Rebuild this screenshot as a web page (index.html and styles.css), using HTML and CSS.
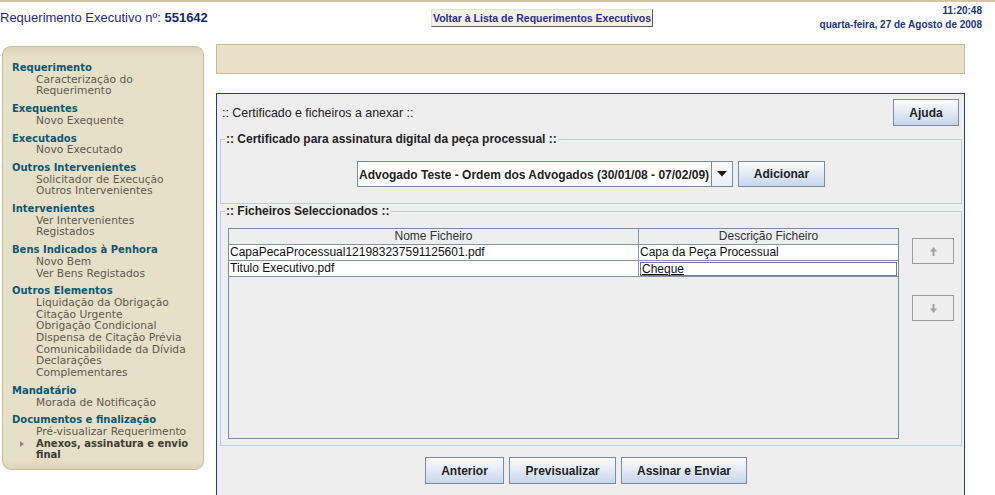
FILE: index.html
```html
<!DOCTYPE html>
<html lang="pt">
<head>
<meta charset="utf-8">
<title>Requerimento Executivo</title>
<link rel="stylesheet" href="styles.css">
</head>
<body>
<div class="topline"></div>
<header class="header">
  <div class="req-title">Requerimento Executivo nº: <b>551642</b></div>
  <div class="back-wrap"><button class="back-btn">Voltar à Lista de Requerimentos Executivos</button></div>
  <div class="datetime">
    <div>11:20:48</div>
    <div>quarta-feira, 27 de Agosto de 2008</div>
  </div>
</header>
<div class="layout">
  <nav class="sidebar">
    <div class="group">
      <div class="group-title">Requerimento</div>
      <a class="item">Caracterização do<br>Requerimento</a>
    </div>
    <div class="group">
      <div class="group-title">Exequentes</div>
      <a class="item">Novo Exequente</a>
    </div>
    <div class="group">
      <div class="group-title">Executados</div>
      <a class="item">Novo Executado</a>
    </div>
    <div class="group">
      <div class="group-title">Outros Intervenientes</div>
      <a class="item">Solicitador de Execução</a>
      <a class="item">Outros Intervenientes</a>
    </div>
    <div class="group">
      <div class="group-title">Intervenientes</div>
      <a class="item">Ver Intervenientes<br>Registados</a>
    </div>
    <div class="group">
      <div class="group-title">Bens Indicados à Penhora</div>
      <a class="item">Novo Bem</a>
      <a class="item">Ver Bens Registados</a>
    </div>
    <div class="group">
      <div class="group-title">Outros Elementos</div>
      <a class="item">Liquidação da Obrigação</a>
      <a class="item">Citação Urgente</a>
      <a class="item">Obrigação Condicional</a>
      <a class="item">Dispensa de Citação Prévia</a>
      <a class="item">Comunicabilidade da Dívida</a>
      <a class="item">Declarações<br>Complementares</a>
    </div>
    <div class="group">
      <div class="group-title">Mandatário</div>
      <a class="item">Morada de Notificação</a>
    </div>
    <div class="group">
      <div class="group-title">Documentos e finalização</div>
      <a class="item">Pré-visualizar Requerimento</a>
      <a class="item current">Anexos, assinatura e envio<br>final</a>
    </div>
  </nav>
  <main class="main">
    <div class="notice"></div>
    <section class="panel">
      <div class="panel-head">
        <span class="panel-title">:: Certificado e ficheiros a anexar ::</span>
        <button class="jbtn btn-ajuda">Ajuda</button>
      </div>
      <fieldset class="box box-cert">
        <legend>:: Certificado para assinatura digital da peça processual ::</legend>
        <div class="cert-row">
          <div class="combo">
            <span class="combo-text">Advogado Teste - Ordem dos Advogados (30/01/08 - 07/02/09)</span>
            <span class="combo-arrow"><svg width="10" height="6" viewBox="0 0 10 6"><path d="M0 0H10L5 5.5Z" fill="#111"/></svg></span>
          </div>
          <button class="jbtn btn-add">Adicionar</button>
        </div>
      </fieldset>
      <fieldset class="box box-files">
        <legend>:: Ficheiros Seleccionados ::</legend>
        <div class="files-row">
          <div class="table-pane">
            <table class="files">
              <thead>
                <tr><th class="col-name">Nome Ficheiro</th><th class="col-desc">Descrição Ficheiro</th></tr>
              </thead>
              <tbody>
                <tr><td class="col-name">CapaPecaProcessual121983237591125601.pdf</td><td class="col-desc">Capa da Peça Processual</td></tr>
                <tr><td class="col-name">Titulo Executivo.pdf</td><td class="col-desc editing"><span class="edit-field">Cheque</span></td></tr>
              </tbody>
            </table>
          </div>
          <div class="order-btns">
            <button class="order-btn"><svg width="7" height="9" viewBox="0 0 7 9"><path d="M3.5 0L7 4.5H4.5V9H2.5V4.5H0Z" fill="#a3a3a3"/></svg></button>
            <button class="order-btn"><svg width="7" height="9" viewBox="0 0 7 9"><path d="M3.5 9L7 4.5H4.5V0H2.5V4.5H0Z" fill="#a3a3a3"/></svg></button>
          </div>
        </div>
      </fieldset>
      <div class="actions">
        <button class="jbtn btn-prev">Anterior</button>
        <button class="jbtn btn-preview">Previsualizar</button>
        <button class="jbtn btn-send">Assinar e Enviar</button>
      </div>
    </section>
  </main>
</div>
</body>
</html>
```
FILE: styles.css
```css
* { box-sizing: border-box; }
html, body { margin: 0; padding: 0; background: #ffffff; }
body {
  font-family: "Liberation Sans", Arial, sans-serif;
  width: 995px;
  height: 495px;
  overflow: hidden;
}

.topline { height: 2px; background: #d2c6a2; }

.header {
  display: grid;
  grid-template-columns: 431px 222px 1fr;
  height: 42px;
}
.req-title {
  padding-top: 8px;
  font-size: 13px;
  line-height: 15px;
  color: #1f2b7d;
  white-space: nowrap;
}
.req-title b { color: #17296f; }
.back-wrap { padding-top: 7px; }
.back-btn {
  display: block;
  width: 222px;
  height: 18px;
  margin: 0;
  padding: 0;
  background: #f3f0e4;
  border: 1px solid;
  border-color: #e6e2d2 #5c5c5c #5c5c5c #e6e2d2;
  font: bold 10.5px/15px "Liberation Sans", Arial, sans-serif;
  color: #2c2d8e;
  text-align: center;
  white-space: nowrap;
}
.datetime {
  padding-top: 2px;
  padding-right: 13px;
  text-align: right;
  font: bold 10px/14px "Liberation Sans", Arial, sans-serif;
  color: #1b3486;
  white-space: nowrap;
}

.layout {
  display: flex;
  align-items: flex-start;
  gap: 12px;
}

/* Sidebar */
.sidebar {
  margin: 2px 0 0 2px;
  width: 202px;
  padding: 15px 4px 8px 9px;
  border: 1px solid #c9bc95;
  border-radius: 9px;
  background: linear-gradient(#dcd3b7, #e7e0c9 10px, #e7e0c9 calc(100% - 10px), #dcd3b7);
}
.group { margin-bottom: 6px; }
.group:last-child { margin-bottom: 0; }
.group-title {
  font: bold 10px/11.7px "DejaVu Sans", Verdana, sans-serif;
  color: #0c5872;
  white-space: nowrap;
}
.item {
  display: block;
  position: relative;
  padding-left: 24px;
  font: 10.7px/11.7px "DejaVu Sans", Verdana, sans-serif;
  color: #5e5b4e;
  white-space: nowrap;
}
.item.current {
  font-weight: bold;
  font-size: 10px;
  color: #3d3b31;
}
.item.current::before {
  content: "";
  position: absolute;
  left: 8px;
  top: 3px;
  border-left: 4px solid #8a8676;
  border-top: 3.5px solid transparent;
  border-bottom: 3.5px solid transparent;
}

/* Main */
.main { width: 749px; }
.notice {
  height: 30px;
  background: #e8e0c9;
  border: 1px solid #c8b892;
}
.panel {
  margin-top: 19px;
  border: 1px solid #1d3f92;
  background: #eeeeee;
  padding-bottom: 20px;
  color: #222222;
}
.panel-head {
  display: flex;
  justify-content: space-between;
  align-items: center;
  padding: 5px 5px 0 5px;
}
.panel-title {
  font-size: 12.4px;
  line-height: 14px;
  color: #222222;
}

.jbtn {
  margin: 0;
  padding: 0;
  border: 1px solid #7a8ba8;
  background: linear-gradient(#fbfcfe, #e4ecf6 45%, #c6d6eb);
  font: bold 12px/14px "Liberation Sans", Arial, sans-serif;
  color: #222222;
  text-align: center;
  white-space: nowrap;
}
.btn-ajuda { width: 66px; height: 27px; }
.btn-add { width: 87px; height: 26px; }
.btn-prev { width: 79px; height: 27px; }
.btn-preview { width: 107px; height: 27px; }
.btn-send { width: 126px; height: 27px; }

.box {
  margin: 0 2px 0 3px;
  padding: 0;
  border: 1px solid #b8cfe5;
  min-width: 0;
}
.box legend {
  margin-left: 4px;
  padding: 0 1px;
  font: bold 12px/14px "Liberation Sans", Arial, sans-serif;
  color: #222222;
}
.box-cert { margin-top: 6px; }

.cert-row {
  display: flex;
  justify-content: center;
  gap: 5px;
  padding: 15px 0 16px 0;
}
.combo {
  display: flex;
  width: 376px;
  height: 26px;
  border: 1px solid #7a8ba8;
  background: #ffffff;
}
.combo-text {
  flex: 1;
  padding-left: 0;
  font: bold 12px/24px "Liberation Sans", Arial, sans-serif;
  color: #222222;
  white-space: nowrap;
  border: 1px solid #ffffff;
  border-right: 0;
}
.combo-arrow {
  width: 21px;
  display: flex;
  align-items: center;
  justify-content: center;
  border-left: 1px solid #7a8ba8;
  background: linear-gradient(#fbfcfe, #e9eff7);
}

.files-row {
  display: flex;
  align-items: flex-start;
  gap: 13px;
  padding: 10px 7px 6px 7px;
}
.table-pane {
  width: 671px;
  height: 211px;
  border: 1px solid #7c8ba6;
  background: #eeeeee;
}
.files {
  border-collapse: separate;
  border-spacing: 0;
  width: 669px;
  table-layout: fixed;
  font: 12px/15px "Liberation Sans", Arial, sans-serif;
}
.files .col-name { width: 410px; }
.files .col-desc { width: 259px; }
.files th {
  height: 16px;
  padding: 0;
  font-weight: normal;
  color: #333333;
  background: #eeeeee;
  border-bottom: 1px solid #8796ae;
  text-align: center;
}
.files th.col-name { border-right: 1px solid #8796ae; }
.files td {
  height: 16px;
  padding: 0 1px;
  background: #ffffff;
  color: #111111;
  border-bottom: 1px solid #8796ae;
  white-space: nowrap;
  overflow: hidden;
}
.files td.col-name { border-right: 1px solid #8796ae; }
.files td.editing { padding: 1px 1px 0 1px; }
.edit-field {
  display: block;
  height: 14px;
  padding-left: 1px;
  border: 1px solid #6d7b94;
  line-height: 13px;
  text-decoration: underline;
}

.order-btns {
  display: flex;
  flex-direction: column;
  gap: 31px;
  padding-top: 10px;
}
.order-btn {
  width: 42px;
  height: 26px;
  margin: 0;
  padding: 0;
  border: 1px solid #9c9c9c;
  background: #eeeeee;
  display: flex;
  align-items: center;
  justify-content: center;
}

.actions {
  display: flex;
  justify-content: center;
  gap: 5px;
  margin-top: 11px;
  padding-right: 9px;
}
```
